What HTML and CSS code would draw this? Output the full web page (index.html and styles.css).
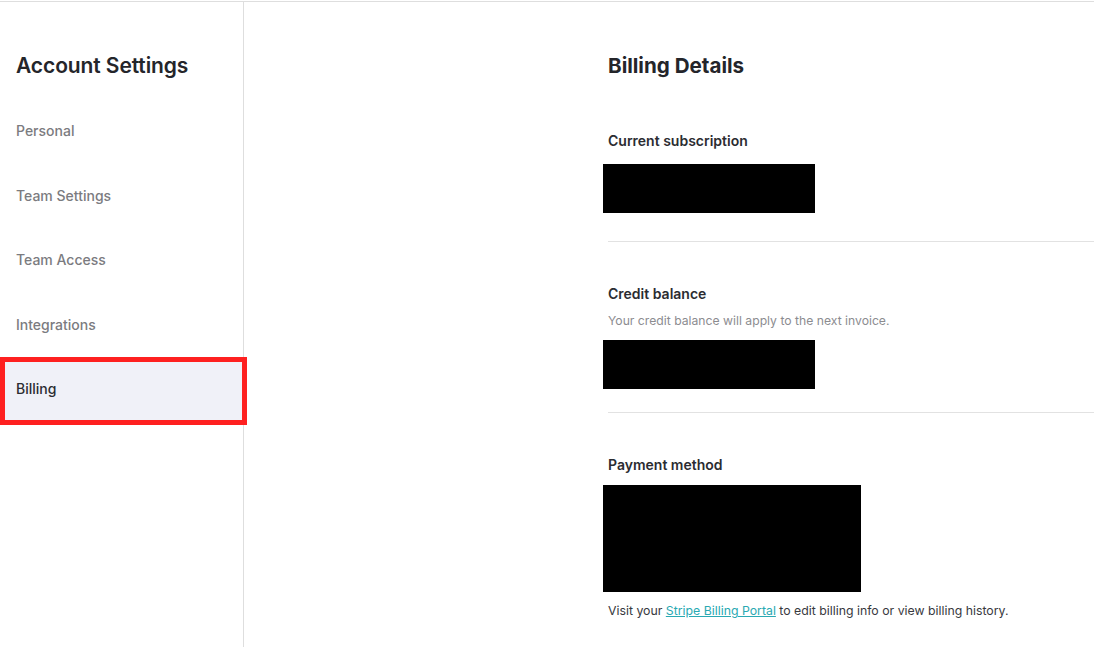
FILE: index.html
```html
<!DOCTYPE html>
<html lang="en">
<head>
<meta charset="utf-8">
<title>Billing Details</title>
<link rel="stylesheet" href="styles.css">
</head>
<body>
<div class="page">
  <aside class="sidebar">
    <h1 class="sidebar-title">Account Settings</h1>
    <nav class="nav">
      <a class="nav-item">Personal</a>
      <a class="nav-item">Team Settings</a>
      <a class="nav-item">Team Access</a>
      <a class="nav-item">Integrations</a>
      <a class="nav-item active">Billing</a>
    </nav>
  </aside>
  <main class="main">
    <div class="content">
      <h2 class="page-title">Billing Details</h2>

      <section class="section first">
        <h3 class="section-title">Current subscription</h3>
        <div class="redact redact-sub"></div>
      </section>

      <section class="section second">
        <h3 class="section-title">Credit balance</h3>
        <p class="section-sub">Your credit balance will apply to the next invoice.</p>
        <div class="redact redact-credit"></div>
      </section>

      <section class="section last">
        <h3 class="section-title">Payment method</h3>
        <div class="redact redact-pay"></div>
        <p class="note">Visit your <a class="link">Stripe Billing Portal</a> to edit billing info or view billing history.</p>
      </section>
    </div>
  </main>
</div>
</body>
</html>
```

FILE: styles.css
```css
* { box-sizing: border-box; }

html, body {
  margin: 0;
  padding: 0;
  background: #ffffff;
  font-family: Inter, "Noto Sans", "Liberation Sans", sans-serif;
  color: #2b2c31;
}

.page {
  display: flex;
  height: 647px;
  border-top: 1px solid #dedede;
  margin-top: 1px;
}

.sidebar {
  width: 244px;
  flex: 0 0 244px;
  border-right: 1px solid #dedede;
  padding-top: 48px;
}

.sidebar-title {
  margin: 0 0 16px 16px;
  font-size: 21px;
  line-height: 32px;
  font-weight: 600;
  letter-spacing: -0.1px;
  color: #24252a;
}

.nav {
  display: flex;
  flex-direction: column;
}

.nav-item {
  display: flex;
  align-items: center;
  height: 64.8px;
  padding-left: 16px;
  font-size: 14px;
  font-weight: 500;
  color: #7b7b80;
}

.nav-item.active {
  position: relative;
  width: 247px;
  height: 68px;
  margin-right: -3px;
  padding-left: 11px;
  padding-bottom: 6px;
  color: #2b2c31;
  background: #f0f1f8;
  border: 5px solid #fe2020;
  z-index: 1;
}

.main {
  flex: 1;
  min-width: 0;
}

.content {
  padding-left: 364px;
  padding-top: 48px;
}

.page-title {
  margin: 0;
  font-size: 20.6px;
  line-height: 32px;
  font-weight: 700;
  color: #24252a;
}

.section {
  border-bottom: 1px solid #e2e2e2;
}

.section.first {
  padding-top: 49px;
  padding-bottom: 28px;
}

.section.second {
  padding-top: 42px;
  padding-bottom: 23px;
}

.section.last {
  border-bottom: none;
  padding-top: 42px;
}

.section-title {
  margin: 0;
  font-size: 14px;
  line-height: 20px;
  font-weight: 600;
  color: #2b2c31;
}

.section-sub {
  margin: 9px 0 0;
  font-size: 12.2px;
  line-height: 16px;
  color: #8c8c90;
}

.redact {
  background: #000000;
  margin-left: -5px;
}

.redact-sub {
  width: 212px;
  height: 49px;
  margin-top: 13px;
}

.redact-credit {
  width: 212px;
  height: 49px;
  margin-top: 11px;
}

.redact-pay {
  width: 258px;
  height: 107px;
  margin-top: 10px;
}

.note {
  margin: 11px 0 0;
  font-size: 12.3px;
  line-height: 16px;
  color: #38393e;
}

.link {
  color: #2aa9b2;
  text-decoration: underline;
}
```
